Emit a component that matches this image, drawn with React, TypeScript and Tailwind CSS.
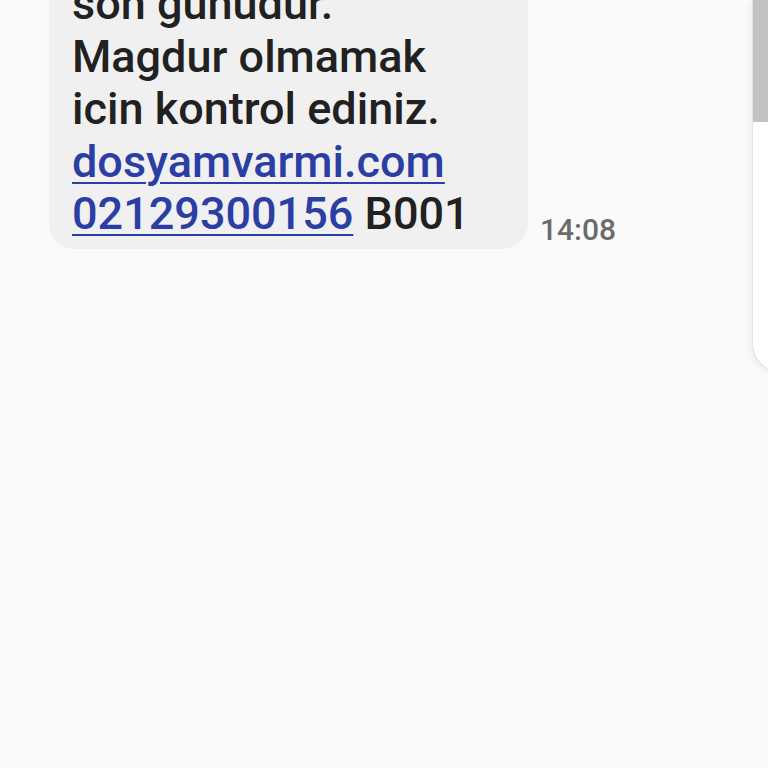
export default function App() {
    const lines = ['son gunudur.', 'Magdur olmamak', 'icin kontrol ediniz.'];

    return (
        <div className="relative w-[768px] h-[768px] overflow-hidden bg-[#fafafa] font-['Roboto',sans-serif]">
            {/* Message row */}
            <div className="flex items-end gap-3 pl-[49px] mt-[-38px]">
                <div className="w-[479px] rounded-[26px] bg-[#f0f0f0] pl-[23px] pt-[16px] pb-[8px] text-[45px] leading-[52.5px] font-medium text-[#212121]">
                    {lines.map((l) => (
                        <div key={l}>{l}</div>
                    ))}
                    <div>
                        <span className="text-[#2b3ea3] underline decoration-2 underline-offset-[5px]">dosyamvarmi.com</span>
                    </div>
                    <div>
                        <span className="text-[#2b3ea3] underline decoration-2 underline-offset-[5px]">02129300156</span> B001
                    </div>
                </div>
                <div className="mb-[1px] text-[30px] leading-[36px] font-medium text-[#6b6b6b]">14:08</div>
            </div>

            {/* Side panel edge */}
            <div className="absolute top-0 left-[752px] w-[40px] h-[372px] rounded-bl-[28px] border-l border-b border-[#e4e4e4] bg-white shadow-[-2px_2px_6px_rgba(0,0,0,0.06)] overflow-hidden">
                <div className="h-[122px] bg-[#c2c2c2]" />
            </div>
        </div>
    );
}
